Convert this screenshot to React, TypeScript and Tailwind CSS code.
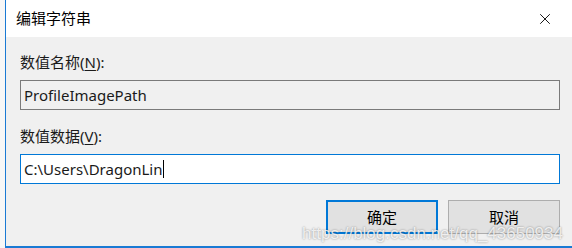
import { X } from 'lucide-react';

const font = { fontFamily: '"Noto Sans", "Noto Sans CJK SC", sans-serif' };

export default function App() {
  return (
    <div className="h-[248px] w-[572px] overflow-hidden bg-[#f7f7f7] pl-[5px]" style={font}>
      <div className="flex h-[248px] flex-col border-b-2 border-l border-[#1a7ad4] bg-[#f0f0f0]">
        <div className="flex h-[37px] items-center justify-between bg-white pl-[10px] pr-[18px]">
          <span className="text-[15px] text-black">编辑字符串</span>
          <X className="h-[18px] w-[18px] text-black" strokeWidth={1.2} />
        </div>

        <div className="flex flex-1 flex-col px-[14px]">
          <label className="mt-[15px] text-[15px] leading-[20px] text-[#1a1a1a]">
            数值名称(<span className="underline underline-offset-2">N</span>):
          </label>
          <div className="mt-[8px] flex h-[30px] w-[540px] items-center border border-[#7a7a7a] bg-[#f0f0f0] px-[3px] text-[15px] text-[#1a1a1a]">
            ProfileImagePath
          </div>

          <label className="mt-[16px] text-[15px] leading-[20px] text-[#1a1a1a]">
            数值数据(<span className="underline underline-offset-2">V</span>):
          </label>
          <div className="mt-[8px] flex h-[30px] w-[540px] items-center border border-[#0078d7] bg-white px-[3px] text-[15px] text-[#1a1a1a]">
            C:\Users\DragonLin
            <span className="ml-[1px] h-[18px] w-px bg-black" />
          </div>

          <div className="relative mt-[16px] flex w-[540px] justify-end gap-[10px]">
            <button className="h-[34px] w-[112px] border-2 border-[#0078d7] bg-[#e1e1e1] text-[15px] text-black">确定</button>
            <button className="h-[34px] w-[112px] border border-[#adadad] bg-[#e1e1e1] text-[15px] text-black">取消</button>
            {/* csdn watermark */}
            <span
              className="pointer-events-none absolute right-[-3px] top-[25px] text-[17px] leading-none text-white/80 [text-shadow:0_0_2px_rgba(0,0,0,0.45)]"
              style={{ fontFamily: '"Liberation Sans", sans-serif' }}
            >
              https://blog.csdn.net/qq_43650934
            </span>
          </div>
        </div>
      </div>
    </div>
  );
}
